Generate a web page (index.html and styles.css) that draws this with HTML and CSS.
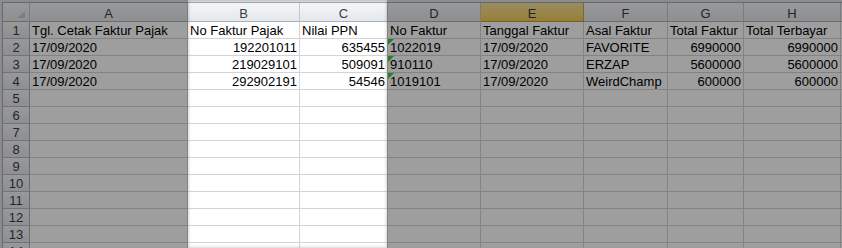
FILE: index.html
```html
<!DOCTYPE html>
<html lang="id">
<head>
<meta charset="utf-8">
<title>Faktur Pajak</title>
<link rel="stylesheet" href="styles.css">
</head>
<body>
<div class="frame">
  <div class="sheet">
    <div class="hd corner"></div>
    <div class="hd">A</div><div class="hd">B</div><div class="hd">C</div><div class="hd">D</div>
    <div class="hd sel">E</div><div class="hd">F</div><div class="hd">G</div><div class="hd">H</div><div class="hd"></div>

    <div class="rh">1</div>
    <div class="c">Tgl. Cetak Faktur Pajak</div><div class="c">No Faktur Pajak</div><div class="c">Nilai PPN</div>
    <div class="c">No Faktur</div><div class="c">Tanggal Faktur</div><div class="c">Asal Faktur</div>
    <div class="c">Total Faktur</div><div class="c">Total Terbayar</div><div class="c"></div>

    <div class="rh">2</div>
    <div class="c">17/09/2020</div><div class="c n">192201011</div><div class="c n">635455</div>
    <div class="c t">1022019</div><div class="c">17/09/2020</div><div class="c">FAVORITE</div>
    <div class="c n">6990000</div><div class="c n">6990000</div><div class="c"></div>

    <div class="rh">3</div>
    <div class="c">17/09/2020</div><div class="c n">219029101</div><div class="c n">509091</div>
    <div class="c t">910110</div><div class="c">17/09/2020</div><div class="c">ERZAP</div>
    <div class="c n">5600000</div><div class="c n">5600000</div><div class="c"></div>

    <div class="rh">4</div>
    <div class="c">17/09/2020</div><div class="c n">292902191</div><div class="c n">54546</div>
    <div class="c t">1019101</div><div class="c">17/09/2020</div><div class="c">WeirdChamp</div>
    <div class="c n">600000</div><div class="c n">600000</div><div class="c"></div>

    <div class="rh">5</div><div class="c"></div><div class="c"></div><div class="c"></div><div class="c"></div><div class="c"></div><div class="c"></div><div class="c"></div><div class="c"></div><div class="c"></div>
    <div class="rh">6</div><div class="c"></div><div class="c"></div><div class="c"></div><div class="c"></div><div class="c"></div><div class="c"></div><div class="c"></div><div class="c"></div><div class="c"></div>
    <div class="rh">7</div><div class="c"></div><div class="c"></div><div class="c"></div><div class="c"></div><div class="c"></div><div class="c"></div><div class="c"></div><div class="c"></div><div class="c"></div>
    <div class="rh">8</div><div class="c"></div><div class="c"></div><div class="c"></div><div class="c"></div><div class="c"></div><div class="c"></div><div class="c"></div><div class="c"></div><div class="c"></div>
    <div class="rh">9</div><div class="c"></div><div class="c"></div><div class="c"></div><div class="c"></div><div class="c"></div><div class="c"></div><div class="c"></div><div class="c"></div><div class="c"></div>
    <div class="rh">10</div><div class="c"></div><div class="c"></div><div class="c"></div><div class="c"></div><div class="c"></div><div class="c"></div><div class="c"></div><div class="c"></div><div class="c"></div>
    <div class="rh">11</div><div class="c"></div><div class="c"></div><div class="c"></div><div class="c"></div><div class="c"></div><div class="c"></div><div class="c"></div><div class="c"></div><div class="c"></div>
    <div class="rh">12</div><div class="c"></div><div class="c"></div><div class="c"></div><div class="c"></div><div class="c"></div><div class="c"></div><div class="c"></div><div class="c"></div><div class="c"></div>
    <div class="rh">13</div><div class="c"></div><div class="c"></div><div class="c"></div><div class="c"></div><div class="c"></div><div class="c"></div><div class="c"></div><div class="c"></div><div class="c"></div>
    <div class="rh">14</div><div class="c"></div><div class="c"></div><div class="c"></div><div class="c"></div><div class="c"></div><div class="c"></div><div class="c"></div><div class="c"></div><div class="c"></div>
  </div>
</div>
<!-- spotlight on columns B and C; everything else is dimmed -->
<div class="spot"></div>
</body>
</html>
```

FILE: styles.css
```css
html, body {
  margin: 0;
  padding: 0;
}

body {
  width: 842px;
  height: 248px;
  overflow: hidden;
  position: relative;
  background: #dfe2e6;
  font: 13px "Liberation Sans", Arial, sans-serif;
  color: #000;
}

/* window frame around the grid */
.frame {
  padding: 2px 0 0 2px;
  height: 100%;
  box-sizing: border-box;
}

.sheet {
  display: grid;
  grid-template-columns: 27px 158px 112px 88px 93px 103px 84px 76px 97px 1fr;
  grid-template-rows: 19px;
  grid-auto-rows: 17px;
  border-top: 1px solid #a3a9b0;
  border-left: 1px solid #a3a9b0;
  background: #fff;
}

.sheet > div {
  box-sizing: border-box;
  white-space: nowrap;
  overflow: hidden;
  line-height: 14px;
  display: flex;
  align-items: flex-end;
}

/* column and row headers */
.hd,
.rh {
  background: linear-gradient(#f5f6f8, #e4e7eb);
  color: #3c3c3c;
  justify-content: center;
}

.hd {
  border-right: 1px solid #c4c8ce;
  border-bottom: 1px solid #aab0b7;
}

.hd.sel {
  background: linear-gradient(#fbe39c, #f5cd5c);
  border-right-color: #cfa446;
  border-bottom-color: #c69833;
}

.rh {
  border-right: 1px solid #a9afb6;
  border-bottom: 1px solid #b6bbc1;
}

/* select-all triangle */
.corner {
  position: relative;
}

.corner::after {
  content: "";
  position: absolute;
  right: 4px;
  bottom: 3px;
  border-left: 8px solid transparent;
  border-bottom: 7px solid #c9cdd2;
}

/* cells */
.c {
  position: relative;
  padding: 0 2px;
  border-right: 1px solid #d4d4d4;
  border-bottom: 1px solid #d4d4d4;
}

.n {
  justify-content: flex-end;
}

/* number stored as text indicator */
.t::before {
  content: "";
  position: absolute;
  left: 0;
  top: 0;
  border-top: 6px solid #38d038;
  border-right: 6px solid transparent;
}

.spot {
  position: absolute;
  left: 188px;
  top: 0;
  width: 199px;
  height: 248px;
  pointer-events: none;
  box-shadow: 0 0 3px 900px rgba(0, 0, 0, 0.38), inset 0 0 3px 1px rgba(0, 0, 0, 0.16);
}
```
